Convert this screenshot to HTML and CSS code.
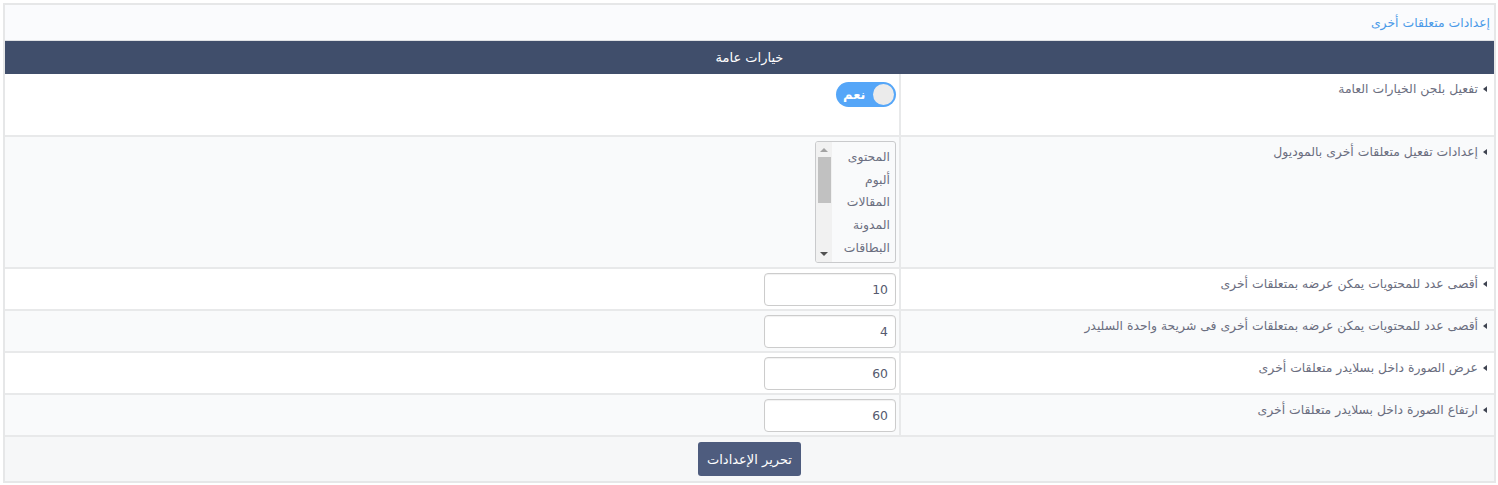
FILE: index.html
```
<!DOCTYPE html>
<html lang="ar" dir="rtl">
<head>
<meta charset="utf-8">
<title>إعدادات متعلقات أخرى</title>
<link rel="stylesheet" href="styles.css">
</head>
<body>
<div class="panel">
  <div class="panel-head">إعدادات متعلقات أخرى</div>
  <div class="section-bar">خيارات عامة</div>
  <div class="row row-toggle">
    <div class="label"><span class="caret"></span>تفعيل بلجن الخيارات العامة</div>
    <div class="value">
      <div class="toggle"><span class="toggle-text">نعم</span><span class="knob"></span></div>
    </div>
  </div>
  <div class="row row-list alt">
    <div class="label"><span class="caret"></span>إعدادات تفعيل متعلقات أخرى بالموديول</div>
    <div class="value">
      <div class="listbox">
        <div class="options">
          <div class="opt">المحتوى</div>
          <div class="opt">ألبوم</div>
          <div class="opt">المقالات</div>
          <div class="opt">المدونة</div>
          <div class="opt">البطاقات</div>
        </div>
        <div class="scrollbar">
          <span class="arrow up"></span>
          <span class="thumb"></span>
          <span class="arrow down"></span>
        </div>
      </div>
    </div>
  </div>
  <div class="row">
    <div class="label"><span class="caret"></span>أقصى عدد للمحتويات يمكن عرضه بمتعلقات أخرى</div>
    <div class="value"><input class="field" type="text" value="10"></div>
  </div>
  <div class="row alt">
    <div class="label"><span class="caret"></span>أقصى عدد للمحتويات يمكن عرضه بمتعلقات أخرى فى شريحة واحدة السليدر</div>
    <div class="value"><input class="field" type="text" value="4"></div>
  </div>
  <div class="row">
    <div class="label"><span class="caret"></span>عرض الصورة داخل بسلايدر متعلقات أخرى</div>
    <div class="value"><input class="field" type="text" value="60"></div>
  </div>
  <div class="row alt">
    <div class="label"><span class="caret"></span>ارتفاع الصورة داخل بسلايدر متعلقات أخرى</div>
    <div class="value"><input class="field" type="text" value="60"></div>
  </div>
  <div class="panel-foot">
    <button class="btn" type="button">تحرير الإعدادات</button>
  </div>
</div>
</body>
</html>
```
FILE: styles.css
```
* { box-sizing: border-box; }
html, body { margin: 0; padding: 0; background: #ffffff; }
body {
  padding: 3px 2px 2px 3px;
  font-family: "DejaVu Sans", "Noto Sans", sans-serif;
  font-size: 12.4px;
  color: #6b6e80;
}
.panel {
  border: 2px solid #e6e7e8;
  background: #fafbfc;
}
.panel-head {
  height: 36px;
  padding: 10px 4px 0 0;
  color: #4b9ae8;
  font-size: 12.4px;
  background: #fafbfd;
  border-bottom: 1px solid #dfe1e4;
}
.section-bar {
  height: 33px;
  background: #404e6b;
  color: #ffffff;
  text-align: center;
  font-size: 13px;
  line-height: 33px;
}
.row {
  display: grid;
  grid-template-columns: 595px 1fr;
  height: 42px;
  background: #ffffff;
  border-bottom: 2px solid #e8e9ea;
}
.row.row-toggle { height: 63px; }
.row.row-list { height: 132px; }
.row.alt { background: #f9fafb; }
.label {
  border-left: 2px solid #e8e9ea;
  padding: 7px 7px 0 0;
  line-height: 16px;
  display: flex;
  align-items: flex-start;
  gap: 5px;
}
.caret {
  width: 0; height: 0;
  border-top: 3px solid transparent;
  border-bottom: 3px solid transparent;
  border-right: 4px solid #3e4350;
  margin-top: 5px;
  flex: none;
}
.value {
  padding: 4px 3px 0 0;
  display: flex;
  align-items: flex-start;
}
.row-toggle .value { padding-top: 8px; }
.toggle {
  width: 60px;
  height: 25px;
  border-radius: 13px;
  background: #55a6f8;
  display: flex;
  align-items: center;
  justify-content: space-between;
  padding: 0 2px 0 7px;
}
.toggle-text {
  color: #ffffff;
  font-weight: bold;
  font-size: 13px;
  order: 2;
}
.knob {
  width: 21px; height: 21px;
  border-radius: 50%;
  background: #ebebeb;
  order: 1;
}
.listbox {
  width: 81px;
  height: 122px;
  border: 1px solid #c9cacc;
  border-radius: 3px;
  background: #f9fafb;
  display: flex;
  overflow: hidden;
}
.options {
  flex: 1;
  padding: 4px 5px 0 0;
  font-size: 12.4px;
  color: #6b6e80;
}
.opt { height: 22.7px; line-height: 22px; }
.scrollbar {
  width: 16px;
  background: #f1f1f1;
  display: flex;
  flex-direction: column;
  align-items: center;
}
.arrow {
  width: 0; height: 0;
  border-left: 4px solid transparent;
  border-right: 4px solid transparent;
}
.arrow.up { border-bottom: 4px solid #a3a3a3; margin-top: 6px; }
.arrow.down { border-top: 4px solid #505050; margin-top: auto; margin-bottom: 6px; }
.thumb {
  width: 13px;
  height: 46px;
  background: #c1c1c1;
  margin-top: 5px;
}
.field {
  width: 132px;
  height: 33px;
  border: 1px solid #cccccc;
  border-radius: 4px;
  background: #ffffff;
  padding: 0 7px;
  text-align: right;
  font-family: "DejaVu Sans", sans-serif;
  font-size: 12.4px;
  color: #555a6e;
  box-shadow: inset 0 1px 1px rgba(0,0,0,0.06);
}
.panel-foot {
  height: 44px;
  background: #f6f7f8;
  display: flex;
  justify-content: center;
  align-items: flex-start;
  padding-top: 5px;
}
.btn {
  width: 103px;
  height: 34px;
  background: #4e5c7e;
  color: #ffffff;
  border: none;
  border-radius: 3px;
  font-family: "DejaVu Sans", sans-serif;
  font-size: 13px;
  padding: 0;
}
```
